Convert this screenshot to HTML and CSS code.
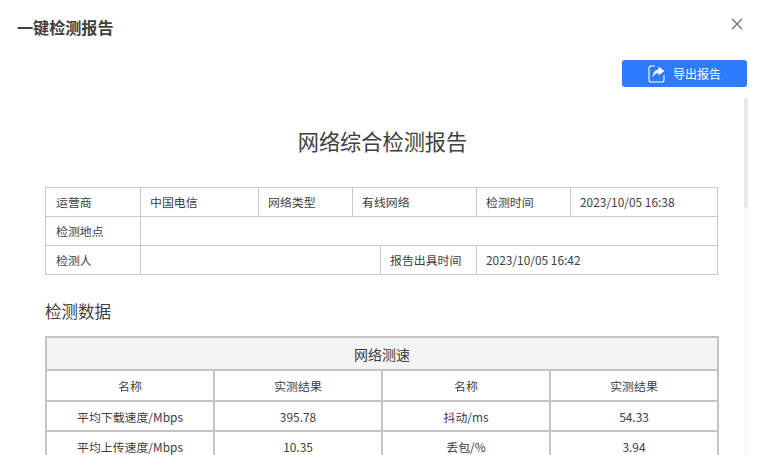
FILE: index.html
```html
<!DOCTYPE html>
<html lang="zh-CN">
<head>
    <meta charset="UTF-8">
    <title>一键检测报告</title>
    <link rel="stylesheet" href="styles.css">
</head>
<body>
    <div class="dialog">
        <div class="dialog-header">
            <h2 class="dialog-title">一键检测报告</h2>
            <button class="close-btn" aria-label="关闭">
                <svg width="12" height="12" viewBox="0 0 12 12"><path d="M1 1l10 10M11 1L1 11" stroke="#666" stroke-width="1.1" fill="none"/></svg>
            </button>
        </div>
        <div class="toolbar">
            <button class="export-btn">
                <svg width="17" height="18" viewBox="0 0 17 18" fill="none">
                    <path d="M7 1H3a2 2 0 0 0-2 2v12a2 2 0 0 0 2 2h11a2 2 0 0 0 2-2v-5" stroke="#fff" stroke-width="1.100"/>
                    <path d="M10.500 1.500L16.500 6l-6 4.500V8C8 8 6 9.500 4.500 12.500c.2-4.500 2.500-7.500 6-8z" fill="#fff"/>
                </svg>
                <span>导出报告</span>
            </button>
        </div>
        <div class="report-scroll">
            <div class="report">
                <h1 class="report-title">网络综合检测报告</h1>
                <table class="info-table">
                    <colgroup>
                        <col class="c1"><col class="c2"><col class="c3"><col class="c4"><col class="c5"><col class="c6"><col class="c7">
                    </colgroup>
                    <tr>
                        <td>运营商</td>
                        <td>中国电信</td>
                        <td>网络类型</td>
                        <td colspan="2">有线网络</td>
                        <td>检测时间</td>
                        <td>2023/10/05 16:38</td>
                    </tr>
                    <tr>
                        <td>检测地点</td>
                        <td colspan="6"></td>
                    </tr>
                    <tr>
                        <td>检测人</td>
                        <td colspan="3"></td>
                        <td>报告出具时间</td>
                        <td colspan="2">2023/10/05 16:42</td>
                    </tr>
                </table>
                <h3 class="section-title">检测数据</h3>
                <table class="data-table">
                    <tr>
                        <th colspan="4">网络测速</th>
                    </tr>
                    <tr>
                        <td>名称</td>
                        <td>实测结果</td>
                        <td>名称</td>
                        <td>实测结果</td>
                    </tr>
                    <tr>
                        <td>平均下载速度/Mbps</td>
                        <td>395.78</td>
                        <td>抖动/ms</td>
                        <td>54.33</td>
                    </tr>
                    <tr>
                        <td>平均上传速度/Mbps</td>
                        <td>10.35</td>
                        <td>丢包/%</td>
                        <td>3.94</td>
                    </tr>
                </table>
            </div>
            <div class="scrollbar">
                <div class="scrollbar-thumb"></div>
            </div>
        </div>
    </div>
</body>
</html>
```

FILE: styles.css
```css
* {
    box-sizing: border-box;
}

html, body {
    height: 100%;
}

body {
    margin: 0;
    overflow: hidden;
    background: #fff;
    color: #404040;
    font-family: "Noto Sans CJK SC", "Noto Sans", sans-serif;
    font-size: 11.900px;
}

.dialog {
    display: flex;
    flex-direction: column;
    height: 455px;
}

.dialog-header {
    display: flex;
    justify-content: space-between;
    align-items: center;
    height: 50px;
    padding: 3px 36px 0 17px;
}

.dialog-title {
    margin: 0;
    font-size: 16.100px;
    font-weight: 700;
    color: #404040;
}

.close-btn {
    display: flex;
    padding: 0;
    border: none;
    background: none;
    margin-bottom: 6px;
}

.toolbar {
    display: flex;
    justify-content: flex-end;
    padding: 10px 32px 11px 0;
}

.export-btn {
    display: flex;
    align-items: center;
    justify-content: center;
    gap: 8px;
    width: 125px;
    height: 27px;
    padding: 0;
    border: none;
    border-radius: 3px;
    background: #2f7bff;
    color: #fff;
    font-family: inherit;
    font-size: 12px;
}

.report-scroll {
    position: relative;
    flex: 1;
    min-height: 0;
    width: 748px;
    overflow: hidden;
}

.scrollbar {
    position: absolute;
    top: 0;
    right: 0;
    bottom: 0;
    width: 4px;
    background: #f8f8f8;
}

.scrollbar-thumb {
    height: 109px;
    background: #e8e8e8;
}

.report {
    padding: 26px 28px 0 45px;
}

.report-title {
    margin: 0 0 30px;
    height: 33px;
    line-height: 33px;
    text-align: center;
    font-size: 21.200px;
    font-weight: 400;
    color: #404040;
}

table {
    border-collapse: collapse;
    table-layout: fixed;
}

.info-table {
    width: 672px;
}

.info-table td {
    height: 29px;
    padding: 0 9px 2px;
    border: 1px solid #c8c8c8;
    white-space: nowrap;
}

.info-table td:first-child {
    padding-left: 10px;
}

.c1 { width: 95px; }
.c2 { width: 118px; }
.c3 { width: 94px; }
.c4 { width: 28px; }
.c5 { width: 96px; }
.c6 { width: 94px; }
.c7 { width: 147px; }

.section-title {
    margin: 25px 0 13px;
    height: 23px;
    line-height: 23px;
    font-size: 16.500px;
    font-weight: 400;
    color: #404040;
}

.data-table {
    width: 674px;
}

.data-table th,
.data-table td {
    border: 2px solid #c4c4c4;
    text-align: center;
    font-weight: 400;
}

.data-table th {
    height: 33px;
    background: #f4f4f4;
    font-size: 14px;
}

.data-table td {
    height: 30.700px;
}
```
